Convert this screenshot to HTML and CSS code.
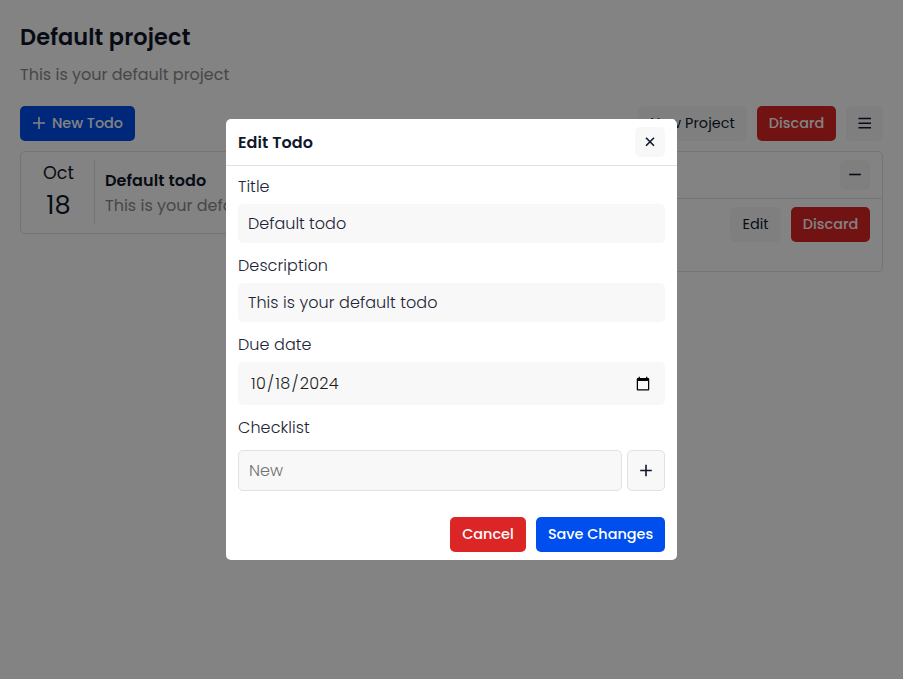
FILE: index.html
```html
<!DOCTYPE html>
<html lang="en-US">
<head>
<meta charset="utf-8">
<title>Todo</title>
<link rel="stylesheet" href="styles.css">
</head>
<body>
<main class="page">
  <h1 class="project-title">Default project</h1>
  <p class="project-desc">This is your default project</p>
  <div class="toolbar">
    <button class="btn primary new-todo"><svg class="ico plus" width="14" height="14" viewBox="0 0 14 14"><path d="M7 1v12M1 7h12"/></svg>New Todo</button>
    <div class="group">
      <button class="btn light new-project">New Project</button>
      <button class="btn danger discard">Discard</button>
      <button class="btn light menu"><svg class="ico" width="14" height="14" viewBox="0 0 14 14"><path d="M.5 1.5h12.5M.5 6.2h12.5M.5 10.8h12.5"/></svg></button>
    </div>
  </div>
  <div class="cards">
    <article class="card todo">
      <div class="date"><span class="month">Oct</span><span class="day">18</span></div>
      <div class="info"><h2 class="todo-title">Default todo</h2><p class="todo-desc">This is your default todo</p></div>
    </article>
    <article class="card detail">
      <header class="detail-head"><button class="square"><svg class="ico" width="14" height="14" viewBox="0 0 14 14"><path d="M1.2 6.5h11.6"/></svg></button></header>
      <div class="detail-body">
        <button class="btn light edit">Edit</button>
        <button class="btn danger discard">Discard</button>
      </div>
    </article>
  </div>
</main>
<div class="overlay">
  <section class="dialog">
    <header class="dialog-head">
      <h2 class="dialog-title">Edit Todo</h2>
      <button class="square"><svg class="ico" width="12" height="12" viewBox="0 0 12 12"><path d="M2 1.8l8 8M10 1.8l-8 8"/></svg></button>
    </header>
    <form class="form">
      <label class="label">Title</label>
      <input class="input" type="text" value="Default todo">
      <label class="label">Description</label>
      <input class="input i-desc" type="text" value="This is your default todo">
      <label class="label">Due date</label>
      <input class="input i-date" type="date" value="2024-10-18">
      <label class="label">Checklist</label>
      <div class="checklist">
        <input class="input i-new" type="text" placeholder="New">
        <button type="button" class="add"><svg class="ico" width="14" height="14" viewBox="0 0 14 14"><path d="M7 .7v11.6M1.2 6.5h11.6"/></svg></button>
      </div>
    </form>
    <footer class="dialog-foot">
      <button class="btn danger cancel">Cancel</button>
      <button class="btn primary save">Save Changes</button>
    </footer>
  </section>
</div>
</body>
</html>
```
FILE: styles.css
```css
* { box-sizing: border-box; margin: 0; }
body, button, input {
  font-family: Poppins, Inter, sans-serif;
}
body { background: #fff; color: #0f172a; font-size: 16px; line-height: 24px; overflow: hidden; }
.page { padding: 20px; height: 679px; }
.project-title { font-size: 22.4px; font-weight: 600; line-height: 34px; letter-spacing: .13px; white-space: nowrap; }
.project-desc { color: #8b8b8b; margin-top: 9px; }
.toolbar { display: flex; justify-content: space-between; margin-top: 19px; }
.group { display: flex; gap: 10px; }
.btn {
  display: flex; align-items: center; justify-content: center;
  height: 35px; padding: 0; border: 0; border-radius: 5px;
  font-size: 14.4px; font-weight: 500; white-space: nowrap;
}
.primary { background: #004eee; color: #fff; }
.danger { background: #dc2626; color: #fff; }
.light { background: #f8f8f8; color: #0f172a; font-weight: 400; }
.ico { fill: none; stroke: currentColor; stroke-width: 1.6; }
.plus { margin-bottom: 2px; }
.new-todo { width: 115px; gap: 6px; }
.new-project { width: 109px; letter-spacing: .05px; }
.discard { width: 79px; }
.menu { width: 37px; }
.edit { width: 51px; }
.cancel { width: 76px; }
.save { width: 129px; }
.cards { display: grid; grid-template-columns: 1fr 1fr; gap: 10px; align-items: start; margin-top: 10px; }
.card { border: 1px solid #e2e2e2; border-radius: 5px; }
.todo { display: flex; height: 83px; padding: 8px 10px 9px; }
.date { width: 64px; padding-right: 8px; display: flex; flex-direction: column; align-items: center; border-right: 1px solid #e2e2e2; }
.month { font-size: 17.6px; line-height: 26px; }
.day { font-size: 25.6px; line-height: 38px; }
.info { padding: 8px 10px; white-space: nowrap; }
.todo-title { font-size: 16px; line-height: 25px; font-weight: 600; letter-spacing: .08px; }
.todo-desc { color: #8b8b8b; line-height: 25px; }
.detail { height: 121px; }
.detail-head { height: 47px; padding: 8px 12px; display: flex; justify-content: flex-end; border-bottom: 1px solid #e2e2e2; }
.detail-body { display: flex; justify-content: flex-end; gap: 10px; padding: 8px 12px; }
.square {
  display: flex; align-items: center; justify-content: center;
  width: 30px; height: 30px; padding: 0; border: 0; border-radius: 5px; background: #f8f8f8; color: #0f172a;
}
.overlay {
  position: fixed; inset: 0; display: flex; align-items: center; justify-content: center;
  background: rgba(0, 0, 0, .486);
}
.dialog { width: 451px; height: 441px; background: #fff; border-radius: 5px; }
.dialog-head { height: 47px; padding: 0 12px; display: flex; align-items: center; justify-content: space-between; border-bottom: 1px solid #e2e2e2; }
.dialog-title { font-size: 16px; font-weight: 600; letter-spacing: .08px; padding-top: 1px; }
.form { display: flex; flex-direction: column; padding: 9px 12px 0; }
.label { height: 24px; margin-bottom: 5px; color: #1c2436; font-weight: 300; letter-spacing: .07px; }
.input {
  height: 39px; margin-bottom: 11px; padding: 0 10px; border: 0; border-radius: 5px;
  background: #f8f8f8; color: #1c2436; font-size: 16px; font-weight: 300; min-width: 0;
}
.i-desc { letter-spacing: .07px; }
.i-date { height: 43px; padding: 0 12px; color: #1c1c1c; letter-spacing: .25px; }
.checklist { display: flex; gap: 5px; margin-top: 5px; }
.i-new { flex: 1; height: 41px; border: 1px solid #e2e2e2; margin: 0; }
.i-new::placeholder { color: #707070; }
.add {
  width: 38px; height: 41px; padding: 0; border: 1px solid #e2e2e2; border-radius: 5px;
  display: flex; align-items: center; justify-content: center; background: #f8f8f8; color: #0f172a;
}
.dialog-foot { display: flex; justify-content: flex-end; gap: 10px; padding: 26px 12px 8px; }
```
